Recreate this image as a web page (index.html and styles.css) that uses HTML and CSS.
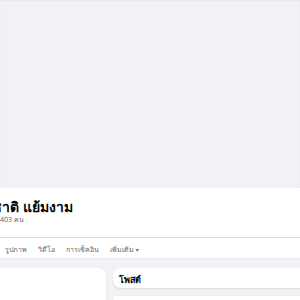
FILE: index.html
```html
<!DOCTYPE html>
<html lang="th">
<head>
  <meta charset="UTF-8">
  <title>ชาติ แย้มงาม</title>
  <link rel="stylesheet" href="styles.css">
</head>
<body>
  <div class="cover"></div>

  <div class="profile-head">
    <div class="profile-info">
      <h1 class="profile-name">ชาติ แย้มงาม</h1>
      <div class="profile-friends">1,403 คน</div>
    </div>
    <nav class="profile-tabs">
      <a href="#">รูปภาพ</a>
      <a href="#">วิดีโอ</a>
      <a href="#">การเช็คอิน</a>
      <a href="#">เพิ่มเติม <span class="caret">▾</span></a>
    </nav>
  </div>

  <div class="profile-body">
    <div class="side-card"></div>
    <div class="feed">
      <div class="card card-title">โพสต์</div>
      <div class="card card-post"></div>
    </div>
  </div>
</body>
</html>
```

FILE: styles.css
```css
:root {
  --fondo: #f0f2f5;
  --texto: #050505;
  --gris: #65676b;
  --linea: #dadde1;
}
html, body {
  height: 300px;
  overflow: hidden;
}
body {
  margin: 0;
  background: var(--fondo);
  font-family: "Noto Sans", "DejaVu Sans", sans-serif;
  color: var(--texto);
}
.cover {
  height: 188px;
  box-shadow: inset 0 1px 2px rgba(0, 0, 0, 0.06);
}
.profile-head {
  background: white;
  height: 70px;
  box-shadow: 0 1px 1px rgba(0, 0, 0, 0.04);
}
.profile-info {
  height: 50px;
  padding-top: 11px;
  box-sizing: border-box;
  border-bottom: 1px solid var(--linea);
}
.profile-name {
  margin: 0 0 0 -8px;
  font-size: 14px;
  line-height: 16px;
  font-weight: bold;
  white-space: nowrap;
}
.profile-friends {
  margin-left: -6px;
  font-size: 7px;
  line-height: 10px;
  color: var(--gris);
  white-space: nowrap;
}
.profile-tabs {
  display: flex;
  gap: 11px;
  padding: 3px 5px 0;
  box-sizing: border-box;
  height: 20px;
  align-items: center;
}
.profile-tabs a {
  font-size: 7px;
  color: var(--gris);
  text-decoration: none;
  white-space: nowrap;
}
.caret {
  font-size: 6px;
}
.profile-body {
  display: flex;
  gap: 7px;
  padding-top: 10px;
}
.side-card {
  width: 106px;
  height: 32px;
  background: white;
  border-radius: 0 8px 0 0;
  box-shadow: 0 1px 2px rgba(0, 0, 0, 0.1);
}
.feed {
  flex: 1;
  display: flex;
  flex-direction: column;
  gap: 8px;
}
.card {
  background: white;
  border-radius: 8px 0 0 8px;
  box-shadow: 0 1px 2px rgba(0, 0, 0, 0.1);
}
.card-title {
  height: 20px;
  line-height: 23px;
  padding-left: 6px;
  font-size: 9px;
  font-weight: bold;
}
.card-post {
  height: 4px;
  border-radius: 8px 0 0 0;
}
```
